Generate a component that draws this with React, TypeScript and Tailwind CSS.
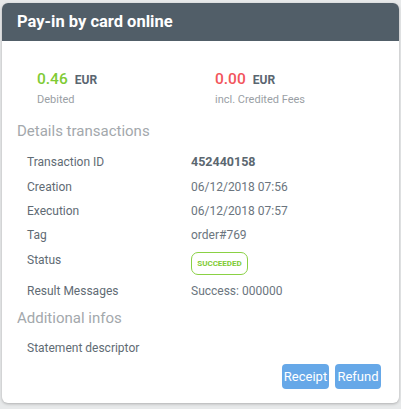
import React from "react";

type Row = {
  label: string;
  value: React.ReactNode;
  className?: string;
};

const rows: Row[] = [
  {
    label: "Transaction ID",
    value: <span className="text-[12.5px] font-bold text-[#5b6770]">452440158</span>,
    className: "h-[27px] items-center",
  },
  { label: "Creation", value: "06/12/2018 07:56", className: "h-[24px] items-center" },
  { label: "Execution", value: "06/12/2018 07:57", className: "h-[24px] items-center" },
  { label: "Tag", value: "order#769", className: "h-[24px] items-center" },
  {
    label: "Status",
    value: (
      <span className="flex h-[23px] w-[57px] items-center justify-center rounded-[7px] border border-[#8ad144] text-[8px] font-bold text-[#7fcb35]">
        SUCCEEDED
      </span>
    ),
    className: "h-[32px] items-start pt-[5px]",
  },
  { label: "Result Messages", value: "Success: 000000", className: "h-[24px] items-center" },
];

const App = () => {
  return (
    <div
      className="min-h-[409px] w-[401px] bg-[#e7e9ea] pt-[3px] pl-[2px]"
      style={{ fontFamily: "Roboto, 'Liberation Sans', sans-serif" }}
    >
      <div className="w-[397px] overflow-hidden rounded-[6px] bg-white shadow-[0_1px_3px_rgba(0,0,0,0.25)]">
        <div className="flex h-[38px] items-center bg-[#515e68] px-[15px]">
          <h1 className="text-[16.5px] font-bold text-white">Pay-in by card online</h1>
        </div>

        <div className="pt-[29px] pb-[14px]">
          <div className="flex pl-[35px]">
            <div className="w-[178px]">
              <div className="flex h-[20px] items-center gap-[7px]">
                <span className="text-[15.5px] font-medium text-[#7fcb35]">0.46</span>
                <span className="text-[12px] font-bold text-[#5a6670]">EUR</span>
              </div>
              <p className="mt-[2px] text-[11px] leading-[16px] text-[#9aa0a5]">Debited</p>
            </div>
            <div>
              <div className="flex h-[20px] items-center gap-[7px]">
                <span className="text-[15.5px] font-medium text-[#f2555b]">0.00</span>
                <span className="text-[12px] font-bold text-[#5a6670]">EUR</span>
              </div>
              <p className="mt-[2px] text-[11px] leading-[16px] text-[#9aa0a5]">incl. Credited Fees</p>
            </div>
          </div>

          <h2 className="mt-[13px] pl-[15px] text-[15px] leading-[20px] text-[#a3a8ac]">
            Details transactions
          </h2>

          <div className="mt-[7px] pl-[25px] text-[12px] text-[#6b757e]">
            {rows.map((row) => (
              <div key={row.label} className={`flex ${row.className}`}>
                <span className="w-[164px] leading-[16px] text-[#5f6b74]">{row.label}</span>
                <span className="leading-[16px]">{row.value}</span>
              </div>
            ))}
          </div>

          <h2 className="mt-[5px] pl-[15px] text-[15px] leading-[20px] text-[#a3a8ac]">
            Additional infos
          </h2>
          <div className="mt-[8px] flex h-[24px] items-center pl-[25px] text-[12px] text-[#5f6b74]">
            Statement descriptor
          </div>

          <div className="mt-[4px] flex justify-end gap-[6px] pr-[18px]">
            <button className="h-[25px] w-[47px] rounded-[4px] bg-[#66a8e8] text-[13px] text-white">
              Receipt
            </button>
            <button className="h-[25px] w-[46px] rounded-[4px] bg-[#66a8e8] text-[13px] text-white">
              Refund
            </button>
          </div>
        </div>
      </div>
    </div>
  );
};

export default App;
